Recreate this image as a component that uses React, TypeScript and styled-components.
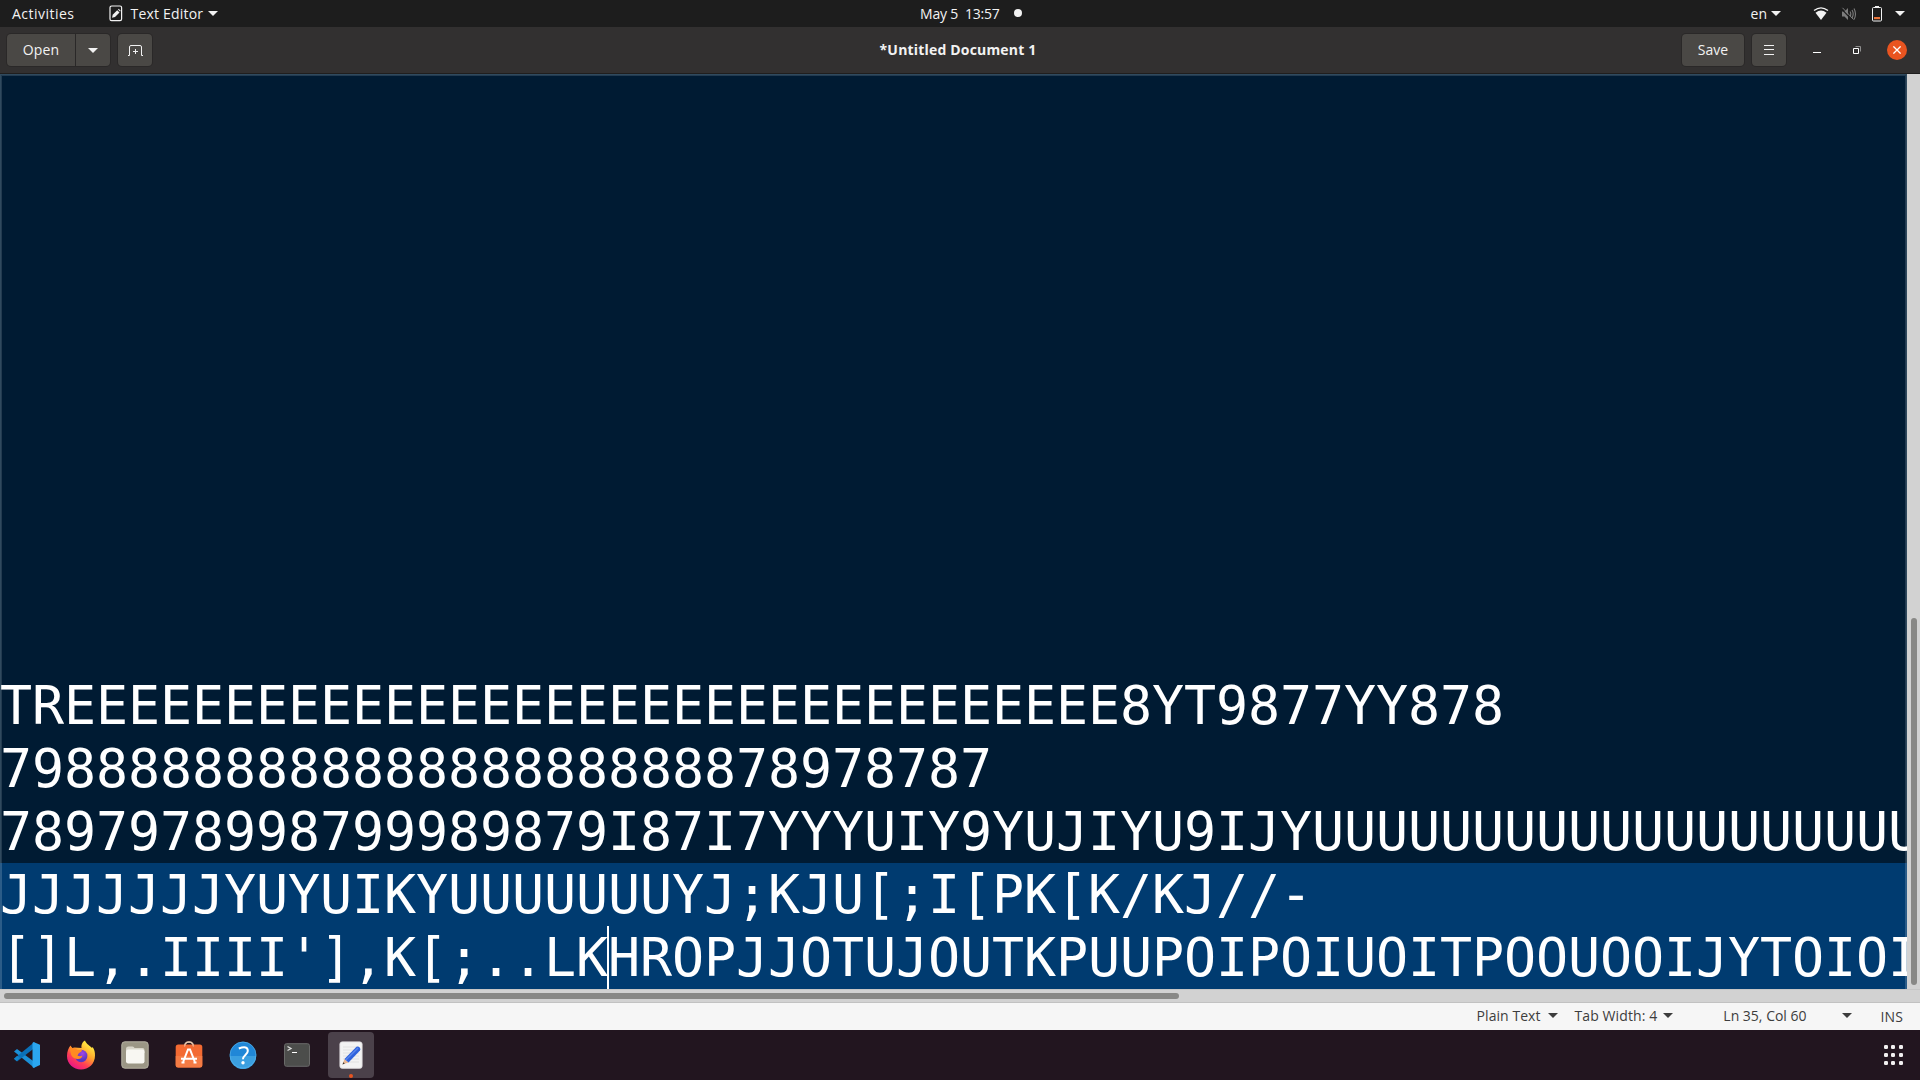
import React from "react";
import styled, { createGlobalStyle } from "styled-components";

const Global = createGlobalStyle`
  * { box-sizing: border-box; }
  body { margin: 0; background: #22151f; overflow: hidden; }
`;

const Desktop = styled.div`
  width: 1920px;
  height: 1080px;
  display: flex;
  flex-direction: column;
  overflow: hidden;
  font-family: "Open Sans", "Noto Sans", sans-serif;
  font-size: 14px;
`;

const Label = styled.span<{ $track?: number; $bold?: boolean; $shift?: number }>`
  white-space: pre;
  letter-spacing: ${(p) => p.$track ?? 0}px;
  font-weight: ${(p) => (p.$bold ? 700 : 400)};
  padding-top: ${(p) => p.$shift ?? 0}px;
`;

const TopBar = styled.header`
  height: 27px;
  flex: none;
  display: grid;
  grid-template-columns: 920px 1fr auto;
  background: #1d1d1d;
  color: #f2f2f2;
`;

const BarGroup = styled.div<{ $start?: number; $end?: number }>`
  display: flex;
  align-items: center;
  padding-left: ${(p) => p.$start ?? 0}px;
  padding-right: ${(p) => p.$end ?? 0}px;
`;

const Item = styled.div<{ $ml?: number }>`
  display: flex;
  align-items: center;
  margin-left: ${(p) => p.$ml ?? 0}px;
`;

const UnsavedDot = styled.i`
  width: 8px;
  height: 8px;
  margin-left: 14px;
  margin-bottom: 1px;
  border-radius: 50%;
  background: #f2f2f2;
`;

const Caret = styled.i<{ $ml?: number; $color?: string }>`
  margin-left: ${(p) => p.$ml ?? 0}px;
  border: 5px solid transparent;
  border-top-color: ${(p) => p.$color ?? "#f2f2f2"};
  border-bottom: 0;
`;

const HeaderBar = styled.div`
  height: 47px;
  flex: none;
  display: grid;
  grid-template-columns: 1fr auto 1fr;
  align-items: center;
  padding: 0 13px 0 7px;
  background: #323030;
  border-bottom: 1px solid #1f1e1e;
  color: #f2f2f2;
`;

const Title = styled.h1`
  margin: 0 0 2px 2px;
  font-size: 14px;
  font-weight: 700;
  letter-spacing: 0.18px;
`;

const HeaderSide = styled.div<{ $right?: boolean }>`
  display: flex;
  align-items: center;
  justify-content: ${(p) => (p.$right ? "flex-end" : "flex-start")};
`;

const Button = styled.button<{ $w: number; $ml?: number; $joined?: "left" | "right" }>`
  width: ${(p) => p.$w}px;
  height: 32px;
  margin: 0 0 0 ${(p) => p.$ml ?? 0}px;
  padding: 0;
  display: flex;
  align-items: center;
  justify-content: center;
  font: inherit;
  color: #f2f2f2;
  background: #4a4845;
  border: 0;
  border-radius: ${(p) => (p.$joined === "left" ? "4px 0 0 4px" : p.$joined === "right" ? "0 4px 4px 0" : "4px")};
  box-shadow: 0 0 0 1px #2a2828;

  ${Label} {
    margin-bottom: 1px;
  }
`;

const WindowIcon = styled.span<{ $ml: number }>`
  display: flex;
  margin-left: ${(p) => p.$ml}px;
`;

const CloseButton = styled.span`
  width: 20px;
  height: 20px;
  margin-left: 26px;
  display: flex;
  align-items: center;
  justify-content: center;
  border-radius: 50%;
  background: #e95420;
`;

const EditorArea = styled.main`
  height: 929px;
  flex: none;
  display: grid;
  grid-template-columns: 1907px 13px;
  grid-template-rows: 915px 14px;
  background: #d2d2d2;
`;

const TextView = styled.section`
  display: flex;
  flex-direction: column;
  justify-content: flex-end;
  overflow: hidden;
  background: #001b33;
  box-shadow: inset 0 0 0 1px #304a5e, inset 0 0 0 2px #233b50;
`;

const Line = styled.div<{ $current?: boolean }>`
  height: 63px;
  flex: none;
  display: flex;
  overflow: hidden;
  white-space: pre;
  font: 53.333px/63px "DejaVu Sans Mono", monospace;
  letter-spacing: -0.108px;
  color: #fff;
  background: ${(p) => (p.$current ? "#003b70" : "transparent")};
  box-shadow: ${(p) =>
    p.$current ? "inset 2px 0 0 rgba(255, 255, 255, 0.17), inset -2px 0 0 rgba(255, 255, 255, 0.17)" : "none"};
`;

const Run = styled.span`
  flex: none;
`;

const TextCursor = styled.i`
  flex: none;
  width: 2px;
  height: 63px;
  margin: 0 -1px;
  background: #fff;
`;

const VerticalTrack = styled.div`
  display: flex;
  flex-direction: column;
  justify-content: flex-end;
  align-items: center;
  padding-bottom: 4px;
`;

const VerticalThumb = styled.i`
  width: 6px;
  height: 367px;
  margin-left: 1px;
  border-radius: 3px;
  background: #888886;
`;

const HorizontalTrack = styled.div`
  grid-column: 1 / 3;
  display: flex;
  align-items: center;
  padding-left: 4px;
  border-top: 1px solid #c6c6c6;
  border-bottom: 1px solid #c2c2c2;
`;

const HorizontalThumb = styled.i`
  width: 1175px;
  height: 6px;
  border-radius: 3px;
  background: #888886;
`;

const StatusBar = styled.footer`
  height: 27px;
  flex: none;
  display: flex;
  align-items: center;
  justify-content: flex-end;
  padding: 0 17px 2px 0;
  background: #f6f6f6;
  color: #3d3d3d;
`;

const Dock = styled.nav`
  height: 50px;
  flex: none;
  display: flex;
  align-items: center;
  background: #22151f;
`;

const DockItem = styled.div<{ $active?: boolean }>`
  width: 46px;
  height: 46px;
  margin: 0 4px;
  display: grid;
  place-items: center;
  position: relative;
  border-radius: 4px;
  background: ${(p) => (p.$active ? "#4b414a" : "transparent")};
`;

const RunningDot = styled.i`
  position: absolute;
  left: 21px;
  bottom: 0;
  width: 4px;
  height: 4px;
  border-radius: 50%;
  background: #e95420;
`;

const AppGrid = styled.div`
  margin-left: auto;
  margin-right: 17px;
  display: grid;
  grid-template-columns: repeat(3, 4px);
  gap: 3.6px;
`;

const GridDot = styled.i`
  width: 4px;
  height: 4px;
  border-radius: 1.3px;
  background: #f2f0f1;
`;

const EditorGlyph = () => (
  <svg width="14" height="17" viewBox="0 0 14 17">
    <rect x="1" y="1" width="11.6" height="14.6" rx="1.6" fill="none" stroke="#f2f2f2" strokeWidth="1.2" />
    <path d="M3 12.8l.7-3L8.2 5.200l2.300 2.300L6 12z" fill="#f2f2f2" />
    <path d="M9 4.500l.7-.7 2 2-.7.8z" fill="#f2f2f2" />
  </svg>
);

const NewTabGlyph = () => (
  <svg width="16" height="14" viewBox="0 0 16 14" fill="none" stroke="#f2f2f2">
    <path d="M1 12.500H2.500V4Q2.500 2.500 4 2.500H13Q14.500 2.500 14.500 4V12.500H16M8.500 6v5M6 8.500h5" />
  </svg>
);

const MenuGlyph = () => (
  <svg width="10" height="10" viewBox="0 0 10 10" stroke="#f2f2f2">
    <path d="M0 .5h10M0 4.500h10M0 9.500h10" />
  </svg>
);

const WifiGlyph = () => (
  <svg width="16" height="14" viewBox="0 0 16 14">
    <path d="M1 3.500Q8-1.800 15 3.500" fill="none" stroke="#f2f2f2" strokeWidth="1.3" />
    <path d="M2.500 5.700Q8 1.500 13.500 5.700L8 13z" fill="#f2f2f2" />
  </svg>
);

const MutedGlyph = () => (
  <svg width="16" height="14" viewBox="0 0 16 14" fill="none" stroke="#7d7d7d">
    <path d="M1 4.500h2.500L7 1v12L3.500 9.500H1z" fill="#7d7d7d" stroke="none" />
    <path d="M9 4.500q1.600 2.500 0 5M11 3q2.400 4 0 8M13 1.500q3 5.500 0 11" strokeWidth="1.100" />
    <path d="M.5 1.800L11.500 13.500" stroke="#1d1d1d" strokeWidth="1.200" />
    <path d="M1.500.8L12.500 12.500" strokeWidth="1" />
  </svg>
);

const BatteryGlyph = () => (
  <svg width="10" height="16" viewBox="0 0 10 16">
    <path d="M3 0h4v2H3z" fill="#f2f2f2" />
    <rect x=".5" y="1.500" width="9" height="13.500" rx="1" fill="none" stroke="#f2f2f2" />
    <path d="M2 11h6v2.200H2z" fill="#e9743a" />
  </svg>
);

const CodeIcon = () => (
  <svg width="28" height="28" viewBox="0 0 28 28">
    <path d="M1 10.500L4 8 21.500 21v6z" fill="#1b8fd6" />
    <path d="M1 17.800L4 20.500 21.500 7V1z" fill="#0a70b8" />
    <path d="M20.500 1L27 3.700V24L20.500 27l-1-1V2z" fill="#2ba6ef" />
    <path d="M1 17.800l3-2.800 3 2-3.500 3z" fill="#1284ca" />
  </svg>
);

const FirefoxIcon = () => (
  <svg width="30" height="30" viewBox="0 0 30 30">
    <defs>
      <linearGradient id="fox" x1=".8" y1=".1" x2=".25" y2=".95">
        <stop offset="0" stopColor="#fff044" />
        <stop offset=".38" stopColor="#ffa52b" />
        <stop offset=".7" stopColor="#ff3f55" />
        <stop offset="1" stopColor="#e91687" />
      </linearGradient>
      <radialGradient id="globe" cx=".6" cy=".3">
        <stop offset="0" stopColor="#a145e8" />
        <stop offset="1" stopColor="#5936c4" />
      </radialGradient>
    </defs>
    <path d="M15.500 8C15 4 17 1.500 19 .5 20 4 24.500 6 26 8l.6-1C28.500 9.500 29 12 29 15.500 29 24 22.500 29.500 15 29.500S1 24 1 16C1 11.500 2.500 8 4.500 5.500L6 8l2.500-.5z" fill="url(#fox)" />
    <circle cx="15.200" cy="16" r="6.200" fill="url(#globe)" />
    <path d="M4.500 6l2 2.500q3-.8 5 1.500h4.500q0 2-3 3l-1.500 2.500q2.500 1.500 5 0-1 4-5.500 3.500-6-1-6.500-7-1.500-3 0-6" fill="#ff8b22" />
  </svg>
);

const FilesIcon = () => (
  <svg width="28" height="28" viewBox="0 0 28 28">
    <rect x=".8" y=".8" width="26.400" height="26.400" rx="3" fill="#9b9685" stroke="#b5b1a3" />
    <path d="M5 8q0-2.500 2.500-2.500h4q1.500 0 2 1.500h8q2 0 2 2v3H5z" fill="#d9d6ca" />
    <rect x="5" y="8.500" width="18.500" height="14" rx="2.200" fill="#f8f7f2" />
  </svg>
);

const SoftwareIcon = () => (
  <svg width="28" height="28" viewBox="0 0 28 28">
    <path d="M9.500 6Q9.500 1 14 1t4.500 5" fill="none" stroke="#d4b399" strokeWidth="1.700" />
    <rect x=".7" y="3.500" width="26.600" height="23" rx="2.500" fill="#f36a32" />
    <path d="M.7 15h26.600v9q0 2.500-2.500 2.500H3.200Q.7 26.500.7 24z" fill="#f47b44" />
    <path d="M9.700 5.500Q10 1 14 1t4.300 4.500" fill="none" stroke="#ead0b9" />
    <path d="M8.300 20.500L13 8.500h2l4.700 12M6 17.800h16M6.500 21.500h3M18.500 21.500h3" fill="none" stroke="#fff" strokeWidth="2" />
  </svg>
);

const HelpIcon = () => (
  <svg width="28" height="28" viewBox="0 0 28 28">
    <circle cx="14" cy="14" r="13.200" fill="#2087d7" />
    <path d="M.8 15h26.400A13.200 13.200 0 0 1 .8 15" fill="#3b9fe0" />
    <circle cx="14" cy="14" r="13" fill="none" stroke="#55b1e9" strokeWidth=".7" />
    <path d="M9.800 7.500Q18.800 4.300 18.800 10c0 3.500-4.800 4-4.800 8.300" fill="none" stroke="#fff" strokeWidth="2" />
    <circle cx="14" cy="21.800" r="1.700" fill="#fff" />
  </svg>
);

const TerminalIcon = () => (
  <svg width="28" height="28" viewBox="0 0 28 28">
    <rect x="1.500" y="2.700" width="25" height="22.600" rx="2" fill="#4c4d4b" stroke="#6a6a69" />
    <path d="M4.500 5.500l3.500 2-3.500 2" fill="none" stroke="#ddd" strokeWidth="1.300" />
    <path d="M9 11.500h5" stroke="#fff" />
  </svg>
);

const TextEditorIcon = () => (
  <svg width="28" height="28" viewBox="0 0 28 28">
    <rect x="2.800" y=".8" width="22.400" height="26.600" rx="2.500" fill="#f3f3f3" stroke="#d4d0d3" strokeWidth=".7" />
    <path d="M6 6h16M6 9h16M6 12h16M6 15h16M6 18h16M6 21h16" stroke="#dcdcdc" strokeWidth=".8" />
    <path d="M5.500 23.500l2-5.500 4 3.500z" fill="#e8b692" />
    <path d="M5.500 23.500l.8-2.300 1.500 1.400z" fill="#333" />
    <path d="M7.500 18L19.500 5.800q1.500-1 3 .5 1.700 1.800.5 3.200L11.500 21.500z" fill="#2f62dc" />
    <path d="M8.800 19L21 7" stroke="#5a86ed" strokeWidth="1.400" />
  </svg>
);

const leadingLines = [
  "TR" + "E".repeat(33) + "8YT9877YY878",
  "79" + "8".repeat(21) + "78978787",
  "7897978998799989879I87I7YYYUIY9YUJIYU9IJY" + "U".repeat(19),
];

const dockApps = [CodeIcon, FirefoxIcon, FilesIcon, SoftwareIcon, HelpIcon, TerminalIcon, TextEditorIcon];

export default function App() {
  return (
    <Desktop>
      <Global />
      <TopBar>
        <BarGroup $start={12}>
          <Label $track={0.48}>Activities</Label>
          <Item $ml={35}><EditorGlyph /></Item>
          <Item $ml={7}><Label $track={0.2}>Text Editor</Label></Item>
          <Caret $ml={5} />
        </BarGroup>
        <BarGroup>
          <Label $track={-0.2}>{"May 5  13:57"}</Label>
          <UnsavedDot />
        </BarGroup>
        <BarGroup $end={15}>
          <Label>en</Label>
          <Caret $ml={4} />
          <Item $ml={32}><WifiGlyph /></Item>
          <Item $ml={12}><MutedGlyph /></Item>
          <Item $ml={15}><BatteryGlyph /></Item>
          <Caret $ml={13} />
        </BarGroup>
      </TopBar>
      <HeaderBar>
        <HeaderSide>
          <Button $w={68} $joined="left"><Label $track={0.1}>Open</Label></Button>
          <Button $w={34} $ml={1} $joined="right"><Caret /></Button>
          <Button $w={34} $ml={8}><NewTabGlyph /></Button>
        </HeaderSide>
        <Title>*Untitled Document 1</Title>
        <HeaderSide $right>
          <Button $w={62}><Label>Save</Label></Button>
          <Button $w={34} $ml={8}><MenuGlyph /></Button>
          <WindowIcon $ml={27}>
            <svg width="8" height="8" viewBox="0 0 8 8"><path d="M0 6.500h8" stroke="#fff" /></svg>
          </WindowIcon>
          <WindowIcon $ml={32}>
            <svg width="8" height="8" viewBox="0 0 8 8" fill="none">
              <path d="M2.500.5h5v5" stroke="#8f8e8e" />
              <path d="M.5 2.500h5v5h-5z" stroke="#fff" />
            </svg>
          </WindowIcon>
          <CloseButton>
            <svg width="8" height="8" viewBox="0 0 8 8"><path d="M.4.4l7.200 7.200M7.600.4L.4 7.600" stroke="#fff" strokeWidth="1.300" /></svg>
          </CloseButton>
        </HeaderSide>
      </HeaderBar>
      <EditorArea>
        <TextView>
          {leadingLines.map((text) => <Line key={text}><Run>{text}</Run></Line>)}
          <Line $current><Run>{"JJJJJJJYUYUIKYUUUUUUUYJ;KJU[;I[PK[K/KJ//-"}</Run></Line>
          <Line $current>
            <Run>{"[]L,.IIII'],K[;..LK"}</Run>
            <TextCursor />
            <Run>HROPJJOTUJOUTKPUUPOIPOIUOITPOOUOOIJYTOIOI</Run>
          </Line>
        </TextView>
        <VerticalTrack><VerticalThumb /></VerticalTrack>
        <HorizontalTrack><HorizontalThumb /></HorizontalTrack>
      </EditorArea>
      <StatusBar>
        <Label $track={0.05}>Plain Text</Label>
        <Caret $ml={7} $color="#3d3d3d" />
        <Item $ml={17}><Label $track={0.1}>Tab Width: 4</Label></Item>
        <Caret $ml={6} $color="#3d3d3d" />
        <Item $ml={50}><Label>Ln 35, Col 60</Label></Item>
        <Caret $ml={35} $color="#3d3d3d" />
        <Item $ml={29}><Label $shift={2} $track={0.1}>INS</Label></Item>
      </StatusBar>
      <Dock>
        {dockApps.map((Icon, i) => (
          <DockItem key={i} $active={i === 6}>
            <Icon />
            {i === 6 && <RunningDot />}
          </DockItem>
        ))}
        <AppGrid>{Array.from({ length: 9 }, (_, i) => <GridDot key={i} />)}</AppGrid>
      </Dock>
    </Desktop>
  );
}
